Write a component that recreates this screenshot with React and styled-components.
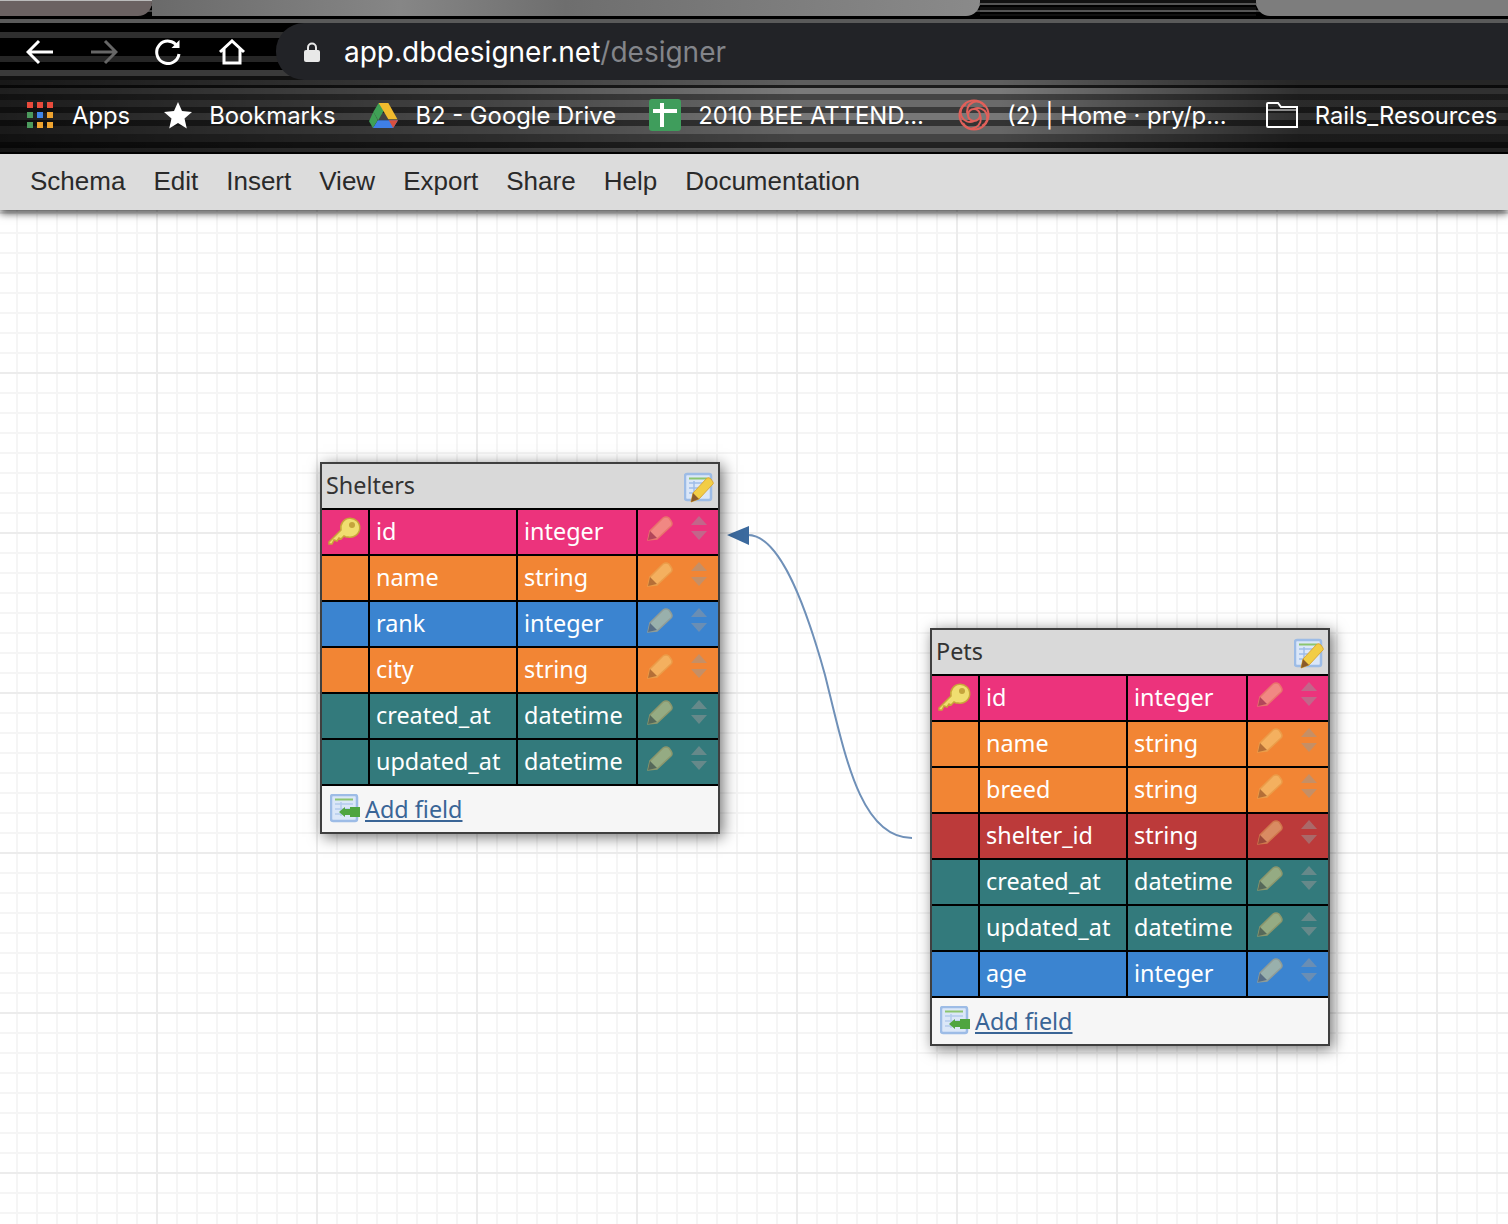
import styled, { createGlobalStyle } from "styled-components";

const shelters = [
  { name: "id", type: "integer", color: "#ec337c", primary: true },
  { name: "name", type: "string", color: "#f28534" },
  { name: "rank", type: "integer", color: "#3b84d0" },
  { name: "city", type: "string", color: "#f28534" },
  { name: "created_at", type: "datetime", color: "#337a7c" },
  { name: "updated_at", type: "datetime", color: "#337a7c" },
];

const pets = [
  { name: "id", type: "integer", color: "#ec337c", primary: true },
  { name: "name", type: "string", color: "#f28534" },
  { name: "breed", type: "string", color: "#f28534" },
  { name: "shelter_id", type: "string", color: "#bc3a3a" },
  { name: "created_at", type: "datetime", color: "#337a7c" },
  { name: "updated_at", type: "datetime", color: "#337a7c" },
  { name: "age", type: "integer", color: "#3b84d0" },
];

const menus = ["Schema", "Edit", "Insert", "View", "Export", "Share", "Help", "Documentation"];

function App() {
  return (
    <>
      <GlobalStyle />
      <Page>
        <TabStrip>
          <TabPiece $width={152} $bg="linear-gradient(#bbb 0 1px, #6b6262 1px)" $round />
          <TabPiece $width={828} $bg="linear-gradient(90deg, #6a6a6a, #868686 30%, #6e6e6e 50%, #7c7c7c 75%, #8a8a8a)" $round />
          <TabPiece $width={276} $bg="repeating-linear-gradient(#111 0 3px, #555 3px 5px, #000 5px 7px)" />
          <TabPiece $bg="#7d7d7d" $roundLeft />
        </TabStrip>
        <Toolbar>
          <NavIcons>
            <NavIcon viewBox="0 0 28 26">
              <path d="M13 2 2 13l11 11M2 13h25" />
            </NavIcon>
            <NavIcon viewBox="0 0 28 26" $dim>
              <path d="M15 2l11 11-11 11M26 13H1" />
            </NavIcon>
            <NavIcon viewBox="0 0 28 26">
              <path d="M23.5 7.5A11.2 11.2 0 1 0 25 15" />
              <path d="M25.5 1v8h-8z" fill="#fff" stroke="none" />
            </NavIcon>
            <NavIcon viewBox="0 0 28 26">
              <path d="M2 13 14 2l12 11M6 10v14h16V10" />
            </NavIcon>
          </NavIcons>
          <Omnibox>
            <LockIcon viewBox="0 0 16 20">
              <path d="M4 8V5.5a4 4 0 0 1 8 0V8" fill="none" stroke="#e8e8e8" strokeWidth="2" />
              <rect x="0" y="8" width="16" height="12" rx="2" fill="#e8e8e8" />
            </LockIcon>
            <UrlHost>
              app.dbdesigner.net<UrlPath>/designer</UrlPath>
            </UrlHost>
          </Omnibox>
        </Toolbar>
        <BookmarksBar>
          <Bookmark>
            <AppsGrid>
              {["#e94b3c", "#e94b3c", "#e94b3c", "#4c9a5d", "#3f86ea", "#eea32f", "#4c9a5d", "#eea32f", "#eea32f"].map((c, i) => (
                <AppsDot key={i} $color={c} />
              ))}
            </AppsGrid>
            Apps
          </Bookmark>
          <Bookmark>
            <svg width="28" height="28" viewBox="0 0 28 28">
              <path d="M14 1l4 9 10 1-7.500 6.500 2.300 10L14 22l-8.800 5.500 2.300-10L0 11l10-1z" fill="#fff" />
            </svg>
            Bookmarks
          </Bookmark>
          <Bookmark>
            <svg width="29" height="27" viewBox="0 0 30 28">
              <path d="M10 1h10L9.500 19 4.500 10z" fill="#3fa055" />
              <path d="M20 1l9.500 17H20L10 1z" fill="#f1bb2d" />
              <path d="M9 19h21l-5 8H4z" fill="#3f7fe6" />
              <path d="M20.500 19H30l-5 8z" fill="#d9503f" />
              <path d="M4.500 10 9 19l-5 8-4-7z" fill="#3fa055" />
            </svg>
            B2 - Google Drive
          </Bookmark>
          <Bookmark $shift={-1}>
            <SheetIcon />
            2010 BEE ATTEND...
          </Bookmark>
          <Bookmark>
            <svg width="32" height="32" viewBox="0 0 32 32" fill="none" stroke="#e0605a" strokeWidth="2">
              <circle cx="16" cy="16" r="14.500" />
              <circle cx="16" cy="16" r="6" />
              <path d="M10 16A9 9 0 0 1 27 8M22 16A9 9 0 0 1 5 24M16 10A9 9 0 0 1 24 27M16 22A9 9 0 0 1 8 5" />
            </svg>
            (2) | Home · pry/p...
          </Bookmark>
          <Bookmark $shift={5}>
            <svg width="32" height="26" viewBox="0 0 32 26" fill="none" stroke="#fff" strokeWidth="2">
              <path d="M1 24V2a1 1 0 0 1 1-1h10l3 4h16v20H2a1 1 0 0 1-1-1z" />
              <path d="M1 8h30" strokeWidth="1" />
            </svg>
            Rails_Resources
          </Bookmark>
        </BookmarksBar>
        <MenuBar>
          {menus.map((m) => (
            <MenuItem key={m}>{m}</MenuItem>
          ))}
        </MenuBar>
        <Canvas>
          <Connector viewBox="0 0 1508 1014">
            <path
              d="M912 628C860 628 845 545 825 465C800 375 775 325 748 325"
              fill="none"
              stroke="#6f90b8"
              strokeWidth="2"
            />
            <path d="M727 325 749 316v19z" fill="#3c6a9e" />
          </Connector>
          <SchemaTable title="Shelters" fields={shelters} x={320} y={252} />
          <SchemaTable title="Pets" fields={pets} x={930} y={418} />
        </Canvas>
      </Page>
    </>
  );
}

function SchemaTable({ title, fields, x, y }) {
  return (
    <Table $x={x} $y={y}>
      <TableHead>
        <TableTitle>{title}</TableTitle>
        <TableEditIcon />
      </TableHead>
      {fields.map((f) => (
        <Row key={f.name} $color={f.color}>
          <KeyCell>{f.primary && <KeyIcon />}</KeyCell>
          <NameCell>{f.name}</NameCell>
          <TypeCell>{f.type}</TypeCell>
          <ActionCell>
            <PencilIcon />
            <SortIcon />
          </ActionCell>
        </Row>
      ))}
      <TableFoot>
        <AddFieldIcon />
        <AddLink>Add field</AddLink>
      </TableFoot>
    </Table>
  );
}

function SheetIcon() {
  return (
    <svg width="32" height="32" viewBox="0 0 32 32">
      <rect width="32" height="32" rx="3" fill="#3f9d5c" />
      <path d="M4 12h24M13 4v24" stroke="#fff" strokeWidth="4" />
    </svg>
  );
}

function KeyIcon() {
  return (
    <BlurIcon width="34" height="34" viewBox="0 0 34 34">
      <path d="M1 27 13 15a9.500 9.500 0 1 1 7 7l-2 0-2-1-3 3-2-1-2 3-3-1-2 4-3 0z" fill="#f0de70" stroke="#c9a53a" strokeWidth="1.500" />
      <circle cx="24" cy="10" r="3" fill="#c4a43c" />
    </BlurIcon>
  );
}

function TableEditIcon() {
  return (
    <EditIconWrap width="30" height="32" viewBox="0 0 30 32">
      <rect x="1" y="2" width="26" height="26" rx="2" fill="#dbe7f8" stroke="#9dbce6" strokeWidth="2.500" />
      <path d="M5 6.500h18" stroke="#8cc56f" strokeWidth="2" />
      <path d="M5 11h18M5 16h12M5 21h8M10 9v15" stroke="#9fbde8" strokeWidth="1.500" />
      <path d="M7 30l2-9L23 6q2-1 4 1l2 3q1 2-1 3L15 27z" fill="#f2cd45" stroke="#d9a83a" strokeWidth="1" />
      <path d="M7 30l2-9 6 6z" fill="#8a5a2a" />
    </EditIconWrap>
  );
}

function PencilIcon() {
  return (
    <FadedIcon width="26" height="26" viewBox="0 0 26 26">
      <path d="M1 25l2-9L16 3q3-2 6 0l2 3q2 3 0 5L10 24z" fill="#f7dc8a" stroke="#e5b45e" strokeWidth="1.500" />
      <path d="M1 25l2-9 7 7z" fill="#7a5a3a" />
    </FadedIcon>
  );
}

function SortIcon() {
  return (
    <SortWrap width="16" height="26" viewBox="0 0 16 26">
      <path d="M8 1l8 9H0zM8 25l-8-9h16z" fill="#999" />
    </SortWrap>
  );
}

function AddFieldIcon() {
  return (
    <BlurIcon width="30" height="30" viewBox="0 0 30 30">
      <rect x="1" y="1" width="26" height="26" rx="2" fill="#dbe7f8" stroke="#9dbce6" strokeWidth="2.500" />
      <path d="M5 5.500h18" stroke="#8cc56f" strokeWidth="2" />
      <path d="M5 10h18M5 15h18M5 20h18M11 8v14" stroke="#b4cbec" strokeWidth="1.500" />
      <path d="M9 18l6-5v2h5v-2h10v10H20v-2h-5v2z" fill="#4fa540" />
    </BlurIcon>
  );
}

const GlobalStyle = createGlobalStyle`
  html, body {
    margin: 0;
    padding: 0;
    background: #fff;
  }
`;

const Page = styled.div`
  width: 1508px;
  height: 1224px;
  display: flex;
  flex-direction: column;
  overflow: hidden;
`;

const TabStrip = styled.div`
  height: 16px;
  display: flex;
  background: repeating-linear-gradient(#000 0 4px, #444 4px 6px);
`;

const TabPiece = styled.div`
  flex: ${(p) => (p.$width ? `0 0 ${p.$width}px` : "1")};
  background: ${(p) => p.$bg};
  border-bottom-right-radius: ${(p) => (p.$round ? "14px" : "0")};
  border-bottom-left-radius: ${(p) => (p.$roundLeft ? "14px" : "0")};
`;

const Toolbar = styled.div`
  height: 64px;
  display: flex;
  align-items: flex-end;
  padding-left: 26px;
  background: linear-gradient(
    #000 0 3px,
    #5a5a5a 3px 7px,
    #000 7px 16px,
    #2e2e2e 16px 22px,
    #000 22px 40px,
    #262626 40px 46px,
    #000 46px 54px,
    #3a3a3a 54px 60px,
    #111 60px
  );
`;

const NavIcons = styled.div`
  display: flex;
  gap: 36px;
  margin-bottom: 15px;
  margin-right: 30px;
`;

const NavIcon = styled.svg`
  width: 28px;
  height: 26px;
  fill: none;
  stroke: ${(p) => (p.$dim ? "#666" : "#fff")};
  stroke-width: 3;
`;

const Omnibox = styled.div`
  flex: 1;
  height: 57px;
  display: flex;
  align-items: center;
  gap: 24px;
  padding-left: 28px;
  background: #222327;
  border-radius: 28px 0 0 28px;
`;

const LockIcon = styled.svg`
  width: 16px;
  height: 20px;
`;

const UrlHost = styled.div`
  font-family: Inter, "Liberation Sans", sans-serif;
  font-size: 28px;
  color: #fff;
`;

const UrlPath = styled.span`
  color: #83858a;
`;

const BookmarksBar = styled.div`
  height: 74px;
  box-sizing: border-box;
  padding: 0 0 4px 27px;
  display: flex;
  align-items: center;
  gap: 34px;
  background:
    linear-gradient(90deg, rgba(0, 0, 0, 0.75) 0, rgba(0, 0, 0, 0.35) 500px, transparent 800px, transparent 1000px, rgba(0, 0, 0, 0.6) 1300px),
    linear-gradient(
      #5e5e5e 0 5px,
      #1c1c1c 5px 8px,
      #7a7a7a 8px 14px,
      #444 14px 20px,
      #6a6a6a 20px 27px,
      #3a3a3a 27px 33px,
      #777 33px 40px,
      #333 40px 46px,
      #666 46px 54px,
      #444 54px 62px,
      #222 62px 68px,
      #555 68px 72px,
      #000 72px
    );
`;

const Bookmark = styled.div`
  display: flex;
  align-items: center;
  gap: 17px;
  margin-left: ${(p) => p.$shift || 0}px;
  font-family: Inter, "Liberation Sans", sans-serif;
  font-size: 23.8px;
  color: #fff;
  white-space: nowrap;
`;

const AppsGrid = styled.div`
  display: grid;
  grid-template-columns: repeat(3, 6px);
  gap: 4px;
  margin-right: 2px;
`;

const AppsDot = styled.span`
  width: 6px;
  height: 6px;
  background: ${(p) => p.$color};
`;

const MenuBar = styled.div`
  position: relative;
  z-index: 2;
  height: 56px;
  box-sizing: border-box;
  padding: 0 0 2px 30px;
  display: flex;
  align-items: center;
  gap: 28px;
  background: #dcdcdc;
  box-shadow: 0 3px 8px rgba(0, 0, 0, 0.75);
`;

const MenuItem = styled.div`
  font-family: "Liberation Sans", Arial, sans-serif;
  font-size: 26px;
  color: #2a2a2a;
`;

const Canvas = styled.div`
  position: relative;
  flex: 1;
  background-color: #fff;
  background-image:
    linear-gradient(90deg, #ececec 2px, transparent 2px),
    linear-gradient(#ececec 2px, transparent 2px),
    linear-gradient(90deg, #f5f5f5 2px, transparent 2px),
    linear-gradient(#f5f5f5 2px, transparent 2px);
  background-size: 160px 160px, 160px 160px, 20px 20px, 20px 20px;
  background-position: 156px 2px, 156px 2px, 16px 2px, 16px 2px;
`;

const Connector = styled.svg`
  position: absolute;
  left: 0;
  top: 0;
  width: 1508px;
  height: 1014px;
`;

const Table = styled.div`
  position: absolute;
  left: ${(p) => p.$x}px;
  top: ${(p) => p.$y}px;
  width: 396px;
  border: 2px solid #3f3f3f;
  background: #000;
  box-shadow: 3px 3px 14px rgba(0, 0, 0, 0.55);
  font-family: "Noto Sans", "Open Sans", sans-serif;
  font-size: 23.4px;
`;

const TableHead = styled.div`
  height: 44px;
  display: flex;
  align-items: center;
  justify-content: space-between;
  padding: 0 4px;
  background: #d9d9d9;
  color: #333;
`;

const TableTitle = styled.span`
  margin-bottom: 2px;
`;

const Row = styled.div`
  display: grid;
  grid-template-columns: 46px 146px 118px 80px;
  column-gap: 2px;
  height: 44px;
  margin-top: 2px;
  color: #fff;
  > div {
    background: ${(p) => p.$color};
  }
`;

const KeyCell = styled.div`
  display: flex;
  align-items: center;
  justify-content: center;
`;

const NameCell = styled.div`
  display: flex;
  align-items: center;
  padding: 0 0 2px 6px;
`;

const TypeCell = styled(NameCell)``;

const ActionCell = styled.div`
  display: flex;
  align-items: flex-start;
  gap: 18px;
  padding: 5px 0 0 9px;
`;

const BlurIcon = styled.svg`
  flex: none;
  filter: blur(0.7px);
`;

const EditIconWrap = styled(BlurIcon)`
  margin-top: 4px;
`;

const FadedIcon = styled(BlurIcon)`
  opacity: 0.5;
`;

const SortWrap = styled(BlurIcon)`
  opacity: 0.5;
`;

const TableFoot = styled.div`
  height: 46px;
  margin-top: 2px;
  display: flex;
  align-items: center;
  gap: 5px;
  padding-left: 8px;
  background: #f6f6f6;
`;

const AddLink = styled.a`
  color: #3a6596;
  text-decoration: underline;
`;

export default App;
